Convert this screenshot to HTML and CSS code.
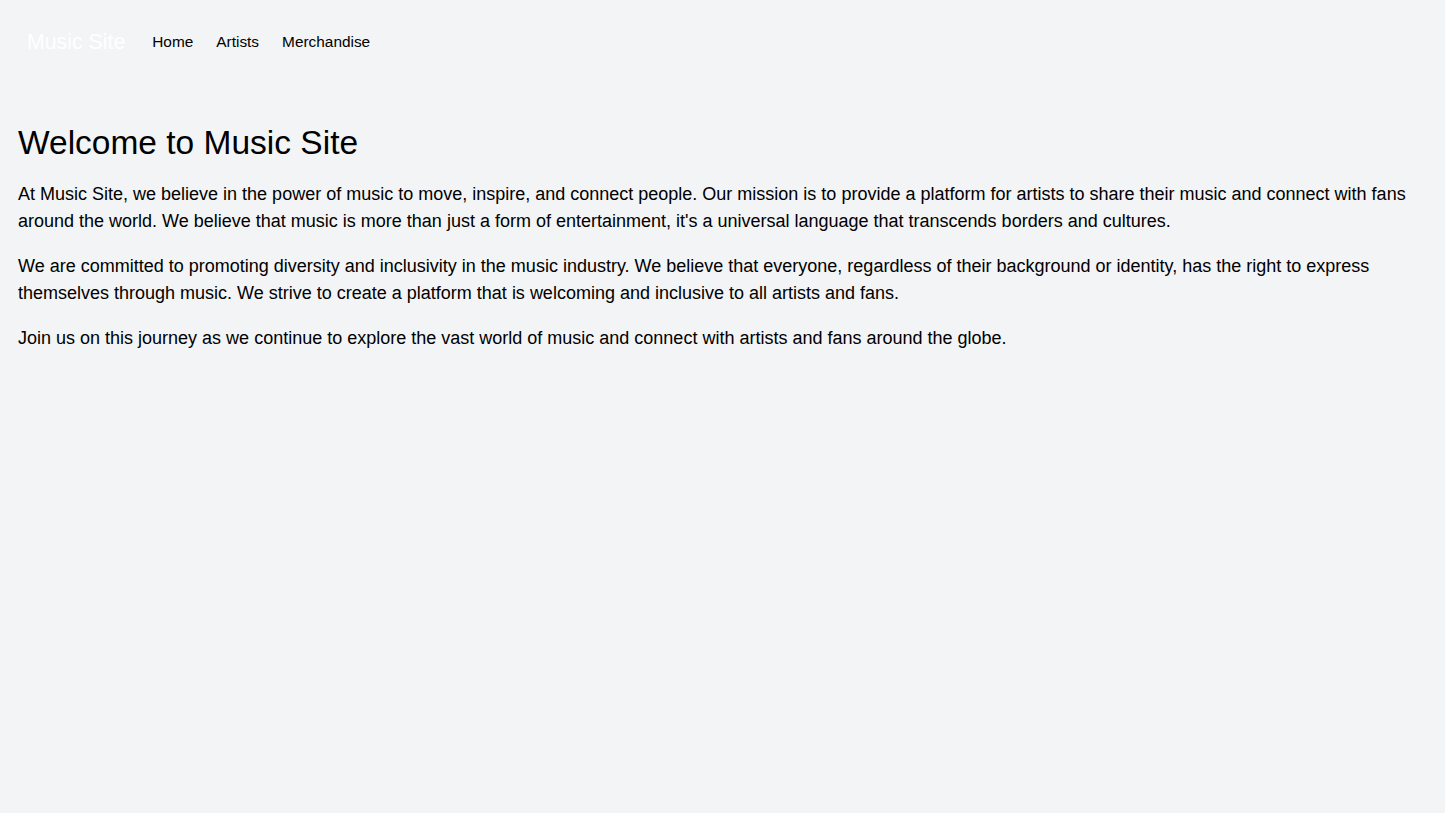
FILE: index.html
```html
<!DOCTYPE html>
<html lang="en">
<head>
<meta charset="utf-8">
<title>Music Site</title>
<link rel="stylesheet" href="styles.css">
</head>
<body>
<nav class="nav">
  <a class="brand" href="#">Music Site</a>
  <ul class="links">
    <li><a href="#">Home</a></li>
    <li><a href="#">Artists</a></li>
    <li><a href="#">Merchandise</a></li>
  </ul>
</nav>
<main class="main">
  <h1 class="title">Welcome to Music Site</h1>
  <p class="text">At Music Site, we believe in the power of music to move, inspire, and connect people. Our mission is to provide a platform for artists to share their music and connect with fans around the world. We believe that music is more than just a form of entertainment, it's a universal language that transcends borders and cultures.</p>
  <p class="text">We are committed to promoting diversity and inclusivity in the music industry. We believe that everyone, regardless of their background or identity, has the right to express themselves through music. We strive to create a platform that is welcoming and inclusive to all artists and fans.</p>
  <p class="text">Join us on this journey as we continue to explore the vast world of music and connect with artists and fans around the globe.</p>
</main>
</body>
</html>
```

FILE: styles.css
```css
html, body {
  margin: 0;
  padding: 0;
}
body {
  background: #f3f4f6;
  color: #000;
  font-family: "Liberation Sans", Arial, sans-serif;
  min-height: 813px;
}
.nav {
  display: flex;
  align-items: center;
  padding: 25px 27px 23px;
  height: 34px;
}
.brand {
  color: #fff;
  font-size: 21.3px;
  text-decoration: none;
  margin-right: 27px;
}
.links {
  display: flex;
  gap: 23px;
  list-style: none;
  margin: 0;
  padding: 0;
}
.links a {
  color: #000;
  font-size: 15.4px;
  text-decoration: none;
}
.main {
  padding: 41px 18px 38px;
}
.title {
  font-size: 33.5px;
  font-weight: 400;
  margin: 0 0 18px;
  line-height: 40px;
}
.text {
  font-size: 18px;
  line-height: 27px;
  margin: 0 0 18px;
}
```
